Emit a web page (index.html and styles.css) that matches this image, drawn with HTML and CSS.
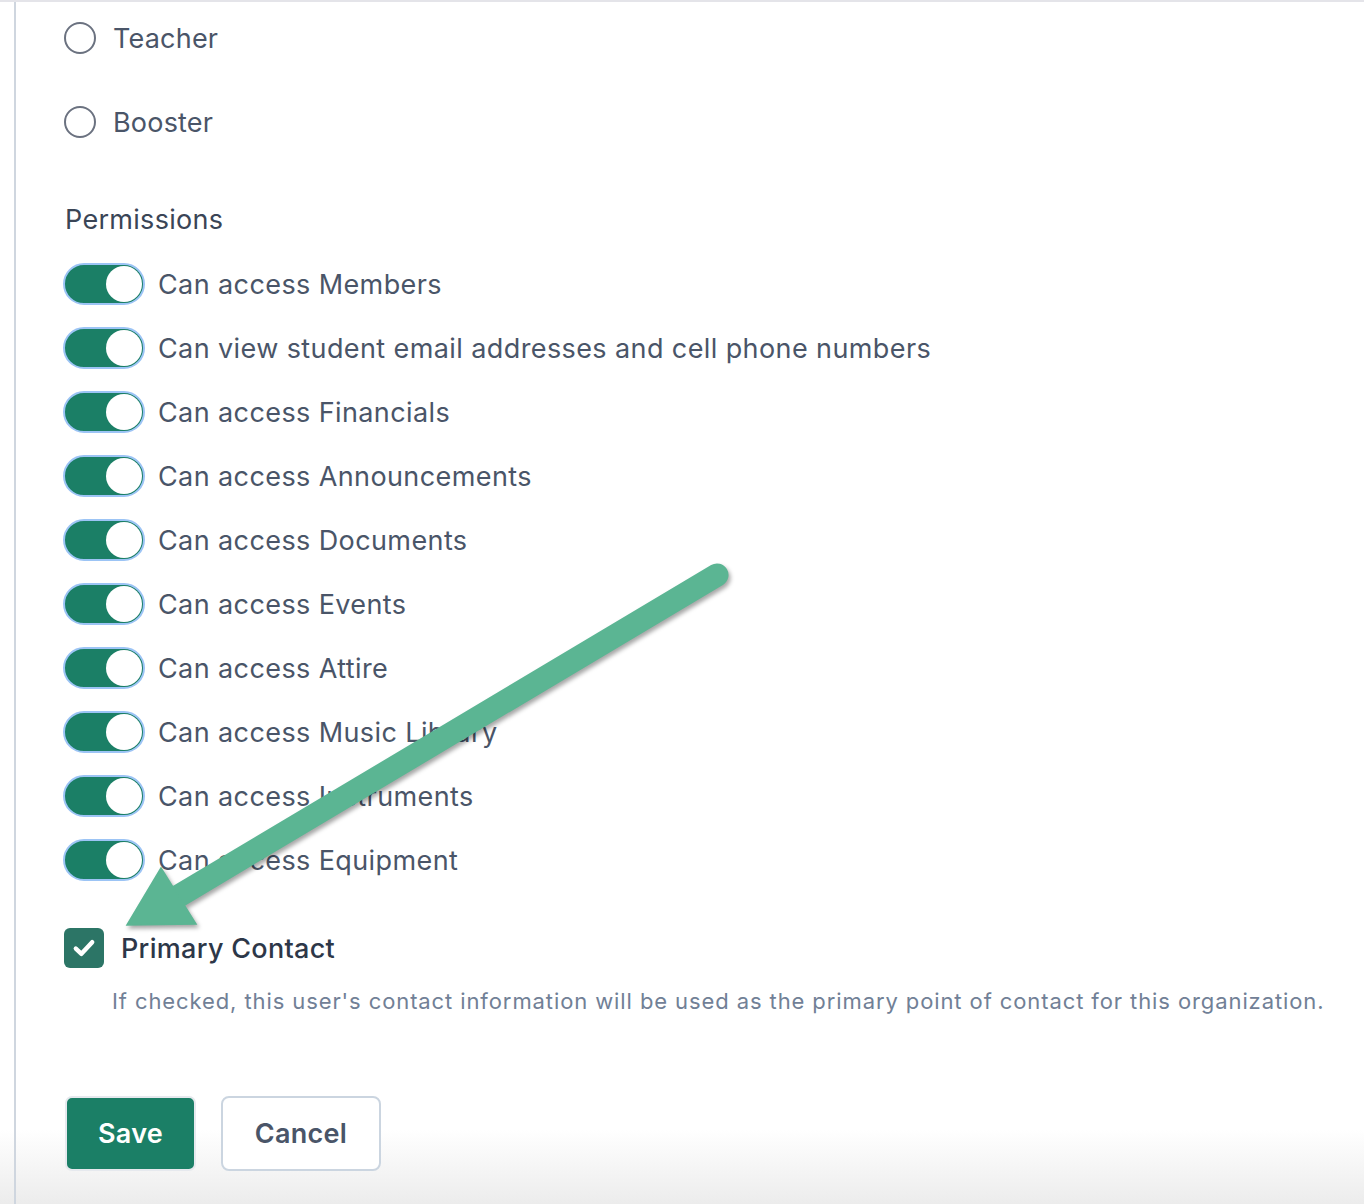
FILE: index.html
```html
<!DOCTYPE html>
<html lang="en">
<head>
<meta charset="utf-8">
<title>Member permissions</title>
<link rel="stylesheet" href="styles.css">
</head>
<body>
<div class="frame">
  <div class="panel">
    <label class="radio-row"><span class="radio"></span><span class="radio-label">Teacher</span></label>
    <label class="radio-row"><span class="radio"></span><span class="radio-label">Booster</span></label>

    <h3 class="section-title">Permissions</h3>
    <ul class="perm-list">
      <li class="perm-row"><span class="toggle"><span class="knob"></span></span><span class="perm-label">Can access Members</span></li>
      <li class="perm-row"><span class="toggle"><span class="knob"></span></span><span class="perm-label">Can view student email addresses and cell phone numbers</span></li>
      <li class="perm-row"><span class="toggle"><span class="knob"></span></span><span class="perm-label">Can access Financials</span></li>
      <li class="perm-row"><span class="toggle"><span class="knob"></span></span><span class="perm-label">Can access Announcements</span></li>
      <li class="perm-row"><span class="toggle"><span class="knob"></span></span><span class="perm-label">Can access Documents</span></li>
      <li class="perm-row"><span class="toggle"><span class="knob"></span></span><span class="perm-label">Can access Events</span></li>
      <li class="perm-row"><span class="toggle"><span class="knob"></span></span><span class="perm-label">Can access Attire</span></li>
      <li class="perm-row"><span class="toggle"><span class="knob"></span></span><span class="perm-label">Can access Music Library</span></li>
      <li class="perm-row"><span class="toggle"><span class="knob"></span></span><span class="perm-label">Can access Instruments</span></li>
      <li class="perm-row"><span class="toggle"><span class="knob"></span></span><span class="perm-label">Can access Equipment</span></li>
    </ul>

    <label class="check-row">
      <span class="checkbox">
        <svg width="28" height="28" viewBox="0 0 24 24"><path d="M5 12.5 L9.8 17 L19 7" fill="none" stroke="#fff" stroke-width="3.8" stroke-linecap="round" stroke-linejoin="round"/></svg>
      </span>
      <span class="check-label">Primary Contact</span>
    </label>
    <p class="help">If checked, this user's contact information will be used as the primary point of contact for this organization.</p>

    <div class="actions">
      <button class="btn btn-primary">Save</button>
      <button class="btn btn-secondary">Cancel</button>
    </div>
  </div>

  <svg class="annotation" width="1364" height="1204" viewBox="0 0 1364 1204">
    <g class="arrow">
      <line x1="717" y1="573" x2="172" y2="898" stroke="#5bb593" stroke-width="23" stroke-linecap="round"/>
      <polygon points="127,923 161,866 196,922" fill="#5bb593" stroke="#5bb593" stroke-width="1.5" stroke-linejoin="miter"/>
    </g>
  </svg>
</div>
</body>
</html>
```

FILE: styles.css
```css
html, body {
  margin: 0;
  padding: 0;
}

body {
  width: 1364px;
  height: 1204px;
  overflow: hidden;
  font-family: Inter, "Open Sans", "Liberation Sans", sans-serif;
  background: linear-gradient(to bottom, #ffffff 0, #ffffff 1130px, #ececec 1204px);
}

.frame {
  position: relative;
  height: 1204px;
  border-top: 2px solid #e4e4e9;
  box-sizing: border-box;
}

.panel {
  margin-left: 14px;
  height: 100%;
  border-left: 2px solid #cfd6df;
  padding-left: 48px;
  padding-top: 14px;
  box-sizing: border-box;
}

.radio-row {
  display: flex;
  align-items: center;
  height: 44px;
  gap: 17px;
}

.radio-row + .radio-row {
  margin-top: 40px;
}

.radio {
  width: 28px;
  height: 28px;
  border: 2px solid #6b7280;
  border-radius: 50%;
  flex: none;
}

.radio-label {
  font-size: 27px;
  color: #4a5568;
  letter-spacing: 0.2px;
}

.section-title {
  margin: 58px 0 0 1px;
  font-size: 27px;
  font-weight: 400;
  line-height: 36px;
  color: #3a4556;
  letter-spacing: 0.3px;
}

.perm-list {
  list-style: none;
  margin: 25px 0 0 -1px;
  padding: 0;
  display: flex;
  flex-direction: column;
  gap: 22px;
}

.perm-row {
  display: flex;
  align-items: center;
  height: 42px;
  gap: 13px;
}

.toggle {
  width: 82px;
  height: 42px;
  box-sizing: border-box;
  border-radius: 21px;
  background: #1b7f66;
  border: 2px solid #9cc4f5;
  box-shadow: inset 0 0 0 1px #1b7f66;
  display: flex;
  align-items: center;
  justify-content: flex-end;
  padding-right: 1px;
  flex: none;
}

.knob {
  width: 36px;
  height: 36px;
  border-radius: 50%;
  background: #ffffff;
}

.perm-label {
  font-size: 27px;
  color: #4a5568;
  letter-spacing: 0.4px;
}

.check-row {
  display: flex;
  align-items: center;
  gap: 17px;
  margin-top: 47px;
  height: 40px;
}

.checkbox {
  width: 40px;
  height: 40px;
  border-radius: 6px;
  background: #2c7566;
  display: flex;
  align-items: center;
  justify-content: center;
  flex: none;
}

.check-label {
  font-size: 27px;
  font-weight: 500;
  color: #2d3748;
  letter-spacing: 0.3px;
}

.help {
  margin: 18px 0 0 48px;
  font-size: 22px;
  line-height: 30px;
  color: #718096;
  letter-spacing: 0.9px;
}

.actions {
  display: flex;
  gap: 25px;
  margin-top: 80px;
  margin-left: 1px;
}

.btn {
  height: 75px;
  box-sizing: border-box;
  font-family: Inter, "Open Sans", "Liberation Sans", sans-serif;
  font-size: 27px;
  font-weight: 600;
  letter-spacing: 0.3px;
  cursor: pointer;
}

.btn-primary {
  width: 131px;
  background: #1b7f66;
  color: #ffffff;
  border: 2px solid #e6e9ee;
  border-radius: 7px;
}

.btn-secondary {
  width: 160px;
  background: #ffffff;
  color: #4a5568;
  border: 2px solid #cbd5e0;
  border-radius: 8px;
}

.annotation {
  position: absolute;
  left: 0;
  top: 0;
  pointer-events: none;
}

.arrow {
  filter: drop-shadow(2px 3px 2px rgba(0, 0, 0, 0.35));
}
```
